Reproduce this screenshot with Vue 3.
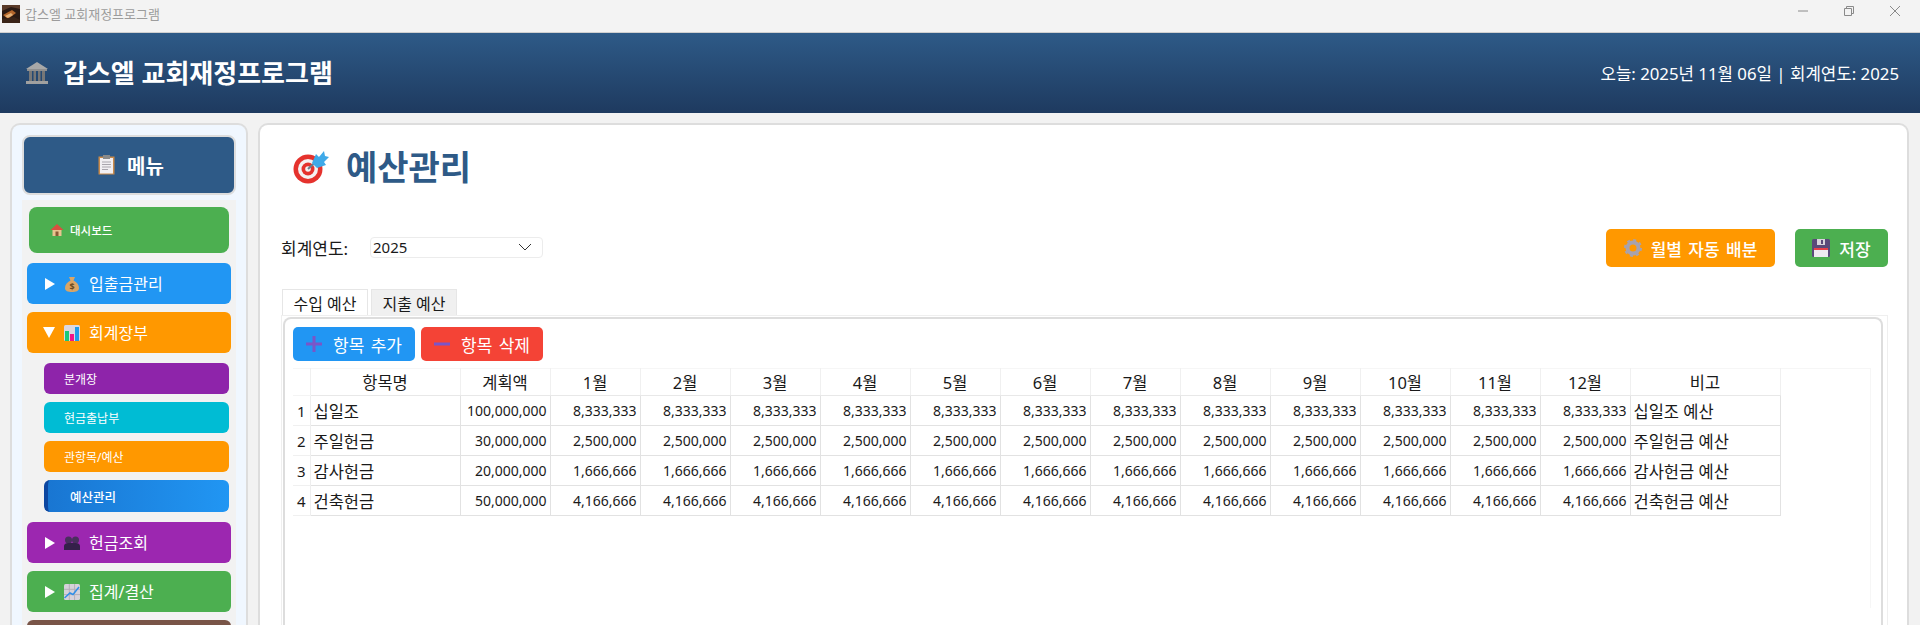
<script setup>
const months = Array.from({ length: 12 }, (_, i) => `${i + 1}월`)

const rows = [
  { name: '십일조', plan: '100,000,000', month: '8,333,333', note: '십일조 예산' },
  { name: '주일헌금', plan: '30,000,000', month: '2,500,000', note: '주일헌금 예산' },
  { name: '감사헌금', plan: '20,000,000', month: '1,666,666', note: '감사헌금 예산' },
  { name: '건축헌금', plan: '50,000,000', month: '4,166,666', note: '건축헌금 예산' },
]

const subItems = [
  { label: '분개장', color: 'purple' },
  { label: '현금출납부', color: 'cyan' },
  { label: '관항목/예산', color: 'orange' },
]
</script>

<template>
  <div class="app">
    <div class="titlebar">
      <svg class="app-icon" width="18" height="18" viewBox="0 0 18 18">
        <rect width="18" height="18" fill="#2a1a14" />
        <path d="M0 6 L9 2 L18 4 V0 H0Z" fill="#5a3a28" />
        <path d="M1 10 L10 5 L14 8 L6 14Z" fill="#b5672c" />
        <path d="M3 11 L9 8 L11 10 L6 13Z" fill="#e3b27a" />
        <path d="M0 14 L12 12 L18 15 V18 H0Z" fill="#3a2418" />
      </svg>
      <span class="app-name">갑스엘 교회재정프로그램</span>
      <div class="win-controls">
        <svg width="12" height="12" viewBox="0 0 12 12"><path d="M1 6h10" stroke="#8a8a8a" fill="none" /></svg>
        <svg width="12" height="12" viewBox="0 0 12 12"><path d="M1.500 3.500h7v7h-7zM3.500 3.500v-2h7v7h-2" stroke="#8a8a8a" fill="none" /></svg>
        <svg width="12" height="12" viewBox="0 0 12 12"><path d="M1 1l10 10M11 1L1 11" stroke="#8a8a8a" fill="none" /></svg>
      </div>
    </div>

    <header class="header">
      <div class="brand">
        <svg width="24" height="24" viewBox="0 0 24 24">
          <path d="M12 1 L23 8 H1Z" fill="#a8a8a8" />
          <rect x="2" y="8" width="20" height="2" fill="#8f8f8f" />
          <path d="M4 10h3v10H4zM8.500 10h2.500v10H8.500zM13 10h2.500v10H13zM17 10h3v10h-3z" fill="#777" />
          <rect x="1" y="20" width="22" height="3" fill="#a0a0a0" />
        </svg>
        <h1>갑스엘 교회재정프로그램</h1>
      </div>
      <div class="today">오늘: 2025년 11월 06일 | 회계연도: 2025</div>
    </header>

    <div class="body">
      <aside class="sidebar">
        <div class="menu-title">
          <svg width="17" height="20" viewBox="0 0 17 20">
            <rect x="0.500" y="1.500" width="16" height="18" fill="#c98a4a" />
            <rect x="2" y="3" width="13" height="15.500" fill="#f1eff2" />
            <rect x="5" y="0" width="7" height="4" fill="#8a8a8a" />
            <path d="M4 7h9M4 9.500h9M4 12h9M4 14.500h6" stroke="#a9a6ad" fill="none" />
          </svg>
          <span>메뉴</span>
        </div>

        <nav class="nav">
          <div class="dash">
            <svg width="14" height="12" viewBox="0 0 13 12">
              <path d="M6.500 0 L13 6 H0Z" fill="#d9503f" />
              <rect x="2" y="6" width="9" height="6" fill="#e8c48f" />
              <rect x="5" y="7.500" width="3" height="4.500" fill="#8a5a35" />
            </svg>
            <span>대시보드</span>
          </div>

          <div class="group blue">
            <span class="tri right"></span>
            <svg width="16" height="16" viewBox="0 0 16 16">
              <path d="M5 1h6L9.500 4.500 C13 6 15 9 15 12 C15 15 12 16 8 16 C4 16 1 15 1 12 C1 9 3 6 6.500 4.500Z" fill="#d9a566" />
              <text x="8" y="13.500" font-size="9" font-weight="700" text-anchor="middle" fill="#6b4a20">$</text>
            </svg>
            <span>입출금관리</span>
          </div>

          <div class="group orange">
            <span class="tri down"></span>
            <svg width="16" height="16" viewBox="0 0 16 16">
              <rect width="16" height="16" rx="1.500" fill="#dcd8e0" />
              <rect x="1" y="6" width="4" height="10" fill="#18c978" />
              <rect x="6" y="9" width="4" height="7" fill="#f0148a" />
              <rect x="11" y="2" width="4" height="14" fill="#1e9bea" />
            </svg>
            <span>회계장부</span>
          </div>

          <div class="subs">
            <div v-for="item in subItems" :key="item.label" class="sub" :class="item.color">{{ item.label }}</div>
            <div class="sub active">예산관리</div>
          </div>

          <div class="group violet">
            <span class="tri right"></span>
            <svg width="16" height="14" viewBox="0 0 16 14">
              <circle cx="4.500" cy="4" r="3.500" fill="#4a2f5e" />
              <circle cx="11.500" cy="4" r="3.500" fill="#4a2f5e" />
              <path d="M0 14V10C0 8 2 7 4.500 7H11.500C14 7 16 8 16 10V14Z" fill="#35204a" />
            </svg>
            <span>헌금조회</span>
          </div>

          <div class="group green">
            <span class="tri right"></span>
            <svg width="16" height="16" viewBox="0 0 16 16">
              <rect width="16" height="16" rx="1.500" fill="#d5d2da" />
              <path d="M5.300 0v16M10.600 0v16M0 5.300h16M0 10.600h16" stroke="#b3afb9" fill="none" />
              <path d="M0.500 14 L6 9 L9 10.500 L15 3" stroke="#2f8fe8" stroke-width="1.500" fill="none" />
            </svg>
            <span>집계/결산</span>
          </div>

          <div class="group brown"></div>
        </nav>
      </aside>

      <main class="main">
        <div class="page-title">
          <svg width="36" height="34" viewBox="0 0 36 34">
            <circle cx="15" cy="19" r="14.500" fill="#e5322d" />
            <circle cx="15" cy="19" r="10" fill="#f4f1f1" />
            <circle cx="15" cy="19" r="6.500" fill="#e5322d" />
            <circle cx="15" cy="19" r="2.800" fill="#f4f1f1" />
            <path d="M15 19 L28 7" stroke="#6b7f8c" stroke-width="2" fill="none" />
            <path d="M19 13 L23 4 L26 7 L31 1 L32 6 L36 7 L31 12 L33 15 L24 18Z" fill="#3fa9e8" />
          </svg>
          <h2>예산관리</h2>
        </div>

        <div class="toolbar">
          <label class="year-label">회계연도:</label>
          <div class="combo">
            <span>2025</span>
            <svg width="14" height="8" viewBox="0 0 14 8"><path d="M1 1l6 6 6-6" stroke="#333" fill="none" /></svg>
          </div>
          <div class="actions">
            <button class="btn auto">
              <svg width="18" height="18" viewBox="0 0 18 18">
                <circle cx="9" cy="9" r="5.500" fill="none" stroke="#a8a2ad" stroke-width="4" />
                <circle cx="9" cy="9" r="8" fill="none" stroke="#a8a2ad" stroke-width="2" stroke-dasharray="3 3.280" />
              </svg>
              <span>월별 자동 배분</span>
            </button>
            <button class="btn save">
              <svg width="18" height="18" viewBox="0 0 18 18">
                <rect width="18" height="18" rx="1.500" fill="#5a4a7a" />
                <rect x="2" y="10" width="14" height="8" fill="#eeeaf0" />
                <rect x="2" y="9" width="14" height="2" fill="#e8404a" />
                <rect x="5" y="0" width="8" height="6" fill="#d8d4dc" />
                <rect x="9" y="1" width="2" height="4" fill="#5a4a7a" />
              </svg>
              <span>저장</span>
            </button>
          </div>
        </div>

        <div class="tabs">
          <div class="tab current">수입 예산</div>
          <div class="tab">지출 예산</div>
        </div>

        <section class="tab-panel">
          <div class="group-box">
            <div class="table-actions">
              <button class="btn add">
                <svg width="16" height="16" viewBox="0 0 16 16"><path d="M8 0v16M0 8h16" stroke="#7a55c8" stroke-width="3" fill="none" /></svg>
                <span>항목 추가</span>
              </button>
              <button class="btn del">
                <svg width="16" height="16" viewBox="0 0 16 16"><path d="M0 8h16" stroke="#7a55c8" stroke-width="3" fill="none" /></svg>
                <span>항목 삭제</span>
              </button>
            </div>

            <div class="table-wrap">
              <table class="budget">
                <colgroup>
                  <col class="c-num" />
                  <col class="c-name" />
                  <col class="c-amt" span="13" />
                  <col class="c-name" />
                </colgroup>
                <thead>
                  <tr>
                    <th class="corner"></th>
                    <th>항목명</th>
                    <th>계획액</th>
                    <th v-for="m in months" :key="m">{{ m }}</th>
                    <th>비고</th>
                  </tr>
                </thead>
                <tbody>
                  <tr v-for="(row, i) in rows" :key="row.name">
                    <td class="num">{{ i + 1 }}</td>
                    <td class="text">{{ row.name }}</td>
                    <td class="amt">{{ row.plan }}</td>
                    <td v-for="m in months" :key="m" class="amt">{{ row.month }}</td>
                    <td class="text">{{ row.note }}</td>
                  </tr>
                </tbody>
              </table>
            </div>
          </div>
        </section>
      </main>
    </div>
  </div>
</template>

<style>
html, body { margin: 0; overflow: hidden; }
</style>

<style scoped>
.app {
  height: 625px; overflow: hidden; display: flex; flex-direction: column;
  background: #f2f2f2; color: #1a1a1a;
  font-family: "Noto Sans", "Noto Sans CJK KR", sans-serif;
}
h1, h2 { margin: 0; }

.titlebar {
  height: 32px; flex: none; display: flex; align-items: center; padding-left: 2px;
  background: #f3f3f3; border-bottom: 1px solid #d0d0d0;
}
.app-icon { margin-right: 5px; margin-top: -5px; }
.app-name { font-size: 13px; color: #9c9c9c; margin-top: -6px; }
.win-controls { margin-left: auto; display: flex; gap: 34px; padding-right: 19px; margin-top: -10px; }
.win-controls svg { display: block; }

.header {
  height: 80px; flex: none; display: flex; align-items: center; justify-content: space-between;
  padding: 0 21px 0 25px;
  background: linear-gradient(180deg, #2e5a87, #1e3a5f);
  color: #fff;
}
.brand { display: flex; align-items: center; gap: 14px; }
.brand h1 { font-size: 26px; font-weight: 700; line-height: 1; }
.today { font-size: 16.800px; }

.body { flex: 1; min-height: 0; display: flex; gap: 10px; padding: 10px 11px 0 10px; }

.sidebar {
  width: 238px; flex: none; box-sizing: border-box;
  padding: 10px 10px 0; background: #f0f7ff;
  border: 2px solid #dddddd; border-bottom: none; border-radius: 10px 10px 0 0;
}
.menu-title {
  height: 60px; box-sizing: border-box; display: flex; align-items: center; justify-content: center; gap: 12px;
  padding-left: 4px;
  background: #2e5a87; border: 2px solid #dddddd; border-radius: 8px; color: #fff;
  font-size: 20px; font-weight: 700;
}
.nav { margin-top: 5px; background: #f2f2f2; padding: 7px 5px 0; color: #fff; }

.dash {
  height: 46px; margin: 0 2px 10px; padding-left: 21px; display: flex; align-items: center; gap: 6px;
  background: #4caf50; border-radius: 8px; font-size: 11.500px; font-weight: 500;
}
.group {
  height: 41px; margin-bottom: 8px; padding-left: 18px; display: flex; align-items: center; gap: 9px;
  border-radius: 6px; font-size: 16px;
}
.group span:last-child { margin-bottom: 2px; }
.group.blue { background: #2196f3; }
.group.orange { background: #ff9800; margin-bottom: 10px; }
.group.violet { background: #9c27b0; }
.group.green { background: #4caf50; }
.group.brown { background: #795548; }
.tri { width: 0; height: 0; flex: none; }
.tri.right { border-left: 10px solid #fff; border-top: 6.500px solid transparent; border-bottom: 6.500px solid transparent; }
.tri.down { border-top: 11px solid #fff; border-left: 6px solid transparent; border-right: 6px solid transparent; margin-left: -2px; }

.subs { display: flex; flex-direction: column; gap: 8px; margin: 0 2px 10px 17px; }
.sub {
  height: 31px; padding-left: 20px; display: flex; align-items: center;
  border-radius: 6px; font-size: 12px;
}
.sub.purple { background: #8e24aa; }
.sub.cyan { background: #00bcd4; }
.sub.orange { background: #ff9800; }
.sub.active {
  height: 32px; padding-left: 22px; box-sizing: border-box; font-size: 12.500px; font-weight: 500;
  background: linear-gradient(90deg, #1976d2, #2196f3); border-left: 4px solid #0d47a1;
}

.main {
  flex: 1; min-width: 0; box-sizing: border-box; display: flex; flex-direction: column;
  padding: 0 19px 0 21px; background: #fff;
  border: 2px solid #dddddd; border-bottom: none; border-radius: 10px 10px 0 0;
}
.page-title { display: flex; align-items: center; gap: 17px; height: 46px; margin: 19px 0 0 12px; }
.page-title h2 { font-size: 34px; font-weight: 700; line-height: 1; color: #2e5a87; }

.toolbar { display: flex; align-items: center; height: 38px; margin-top: 39px; }
.year-label { font-size: 17px; width: 89px; flex: none; margin-bottom: 2px; }
.combo {
  width: 173px; height: 21px; box-sizing: border-box; padding: 0 10px 0 2px; margin-bottom: 2px;
  display: flex; align-items: center; justify-content: space-between;
  border: 1px solid #ececec; border-radius: 4px; font-size: 15px;
}
.actions { margin-left: auto; display: flex; gap: 20px; }

.btn {
  display: flex; align-items: center; justify-content: center; gap: 9px; box-sizing: border-box;
  border: none; border-radius: 5px; color: #fff; font-family: inherit; padding: 0;
}
.btn.auto { width: 169px; height: 38px; background: #ff9800; font-size: 17px; font-weight: 500; word-spacing: 2px; }
.btn.save { width: 93px; height: 38px; background: #4caf50; font-size: 17px; font-weight: 500; }
.btn.add { width: 122px; height: 34px; background: #2196f3; font-size: 17px; gap: 11px; word-spacing: 2px; }
.btn.del { width: 122px; height: 34px; background: #f44336; font-size: 17px; gap: 11px; word-spacing: 2px; }

.tabs { display: flex; gap: 3px; margin: 22px 0 0 1px; height: 26px; }
.tab {
  width: 86px; box-sizing: border-box; display: flex; align-items: center; justify-content: center;
  font-size: 16px; background: #f0f0f0; border: 1px solid #e6e6e6; border-bottom: none;
}
.tab.current { background: #fff; }

.tab-panel {
  flex: 1; min-height: 0; box-sizing: border-box; padding: 1px 4px 0 1px;
  border: 1px solid #efefef; border-bottom: none;
}
.group-box {
  height: 100%; box-sizing: border-box; padding: 8px 10px 0 8px;
  border: 2px solid #dddddd; border-bottom: none; border-radius: 8px 8px 0 0;
}
.table-actions { display: flex; gap: 6px; }
.table-wrap { margin-top: 7px; height: 240px; box-sizing: border-box; box-shadow: inset 0 1px 0 #f6f6f6, inset -1px 0 0 #f6f6f6; }

.budget { border-collapse: collapse; table-layout: fixed; width: 1487px; }
.c-num { width: 17px; }
.c-name { width: 150px; }
.c-amt { width: 90px; }
.budget th {
  height: 27px; padding: 0; font-size: 16.500px; font-weight: 400; text-align: center;
  border-right: 1px solid #f0f0f0; border-bottom: 1px solid #e8e8e8;
}
.budget th.corner { border-bottom-color: #f4f4f4; }
.budget td {
  height: 29px; padding: 0 3px; font-size: 14px; overflow: hidden; white-space: nowrap;
  border-right: 1px solid #e2e2e2; border-bottom: 1px solid #e2e2e2;
}
.budget td.num { padding: 0; text-align: center; font-size: 15px; border-right-color: #eeeeee; border-bottom-color: #f0f0f0; }
.budget td.text { font-size: 16.500px; }
.budget td.amt { text-align: right; }
</style>
